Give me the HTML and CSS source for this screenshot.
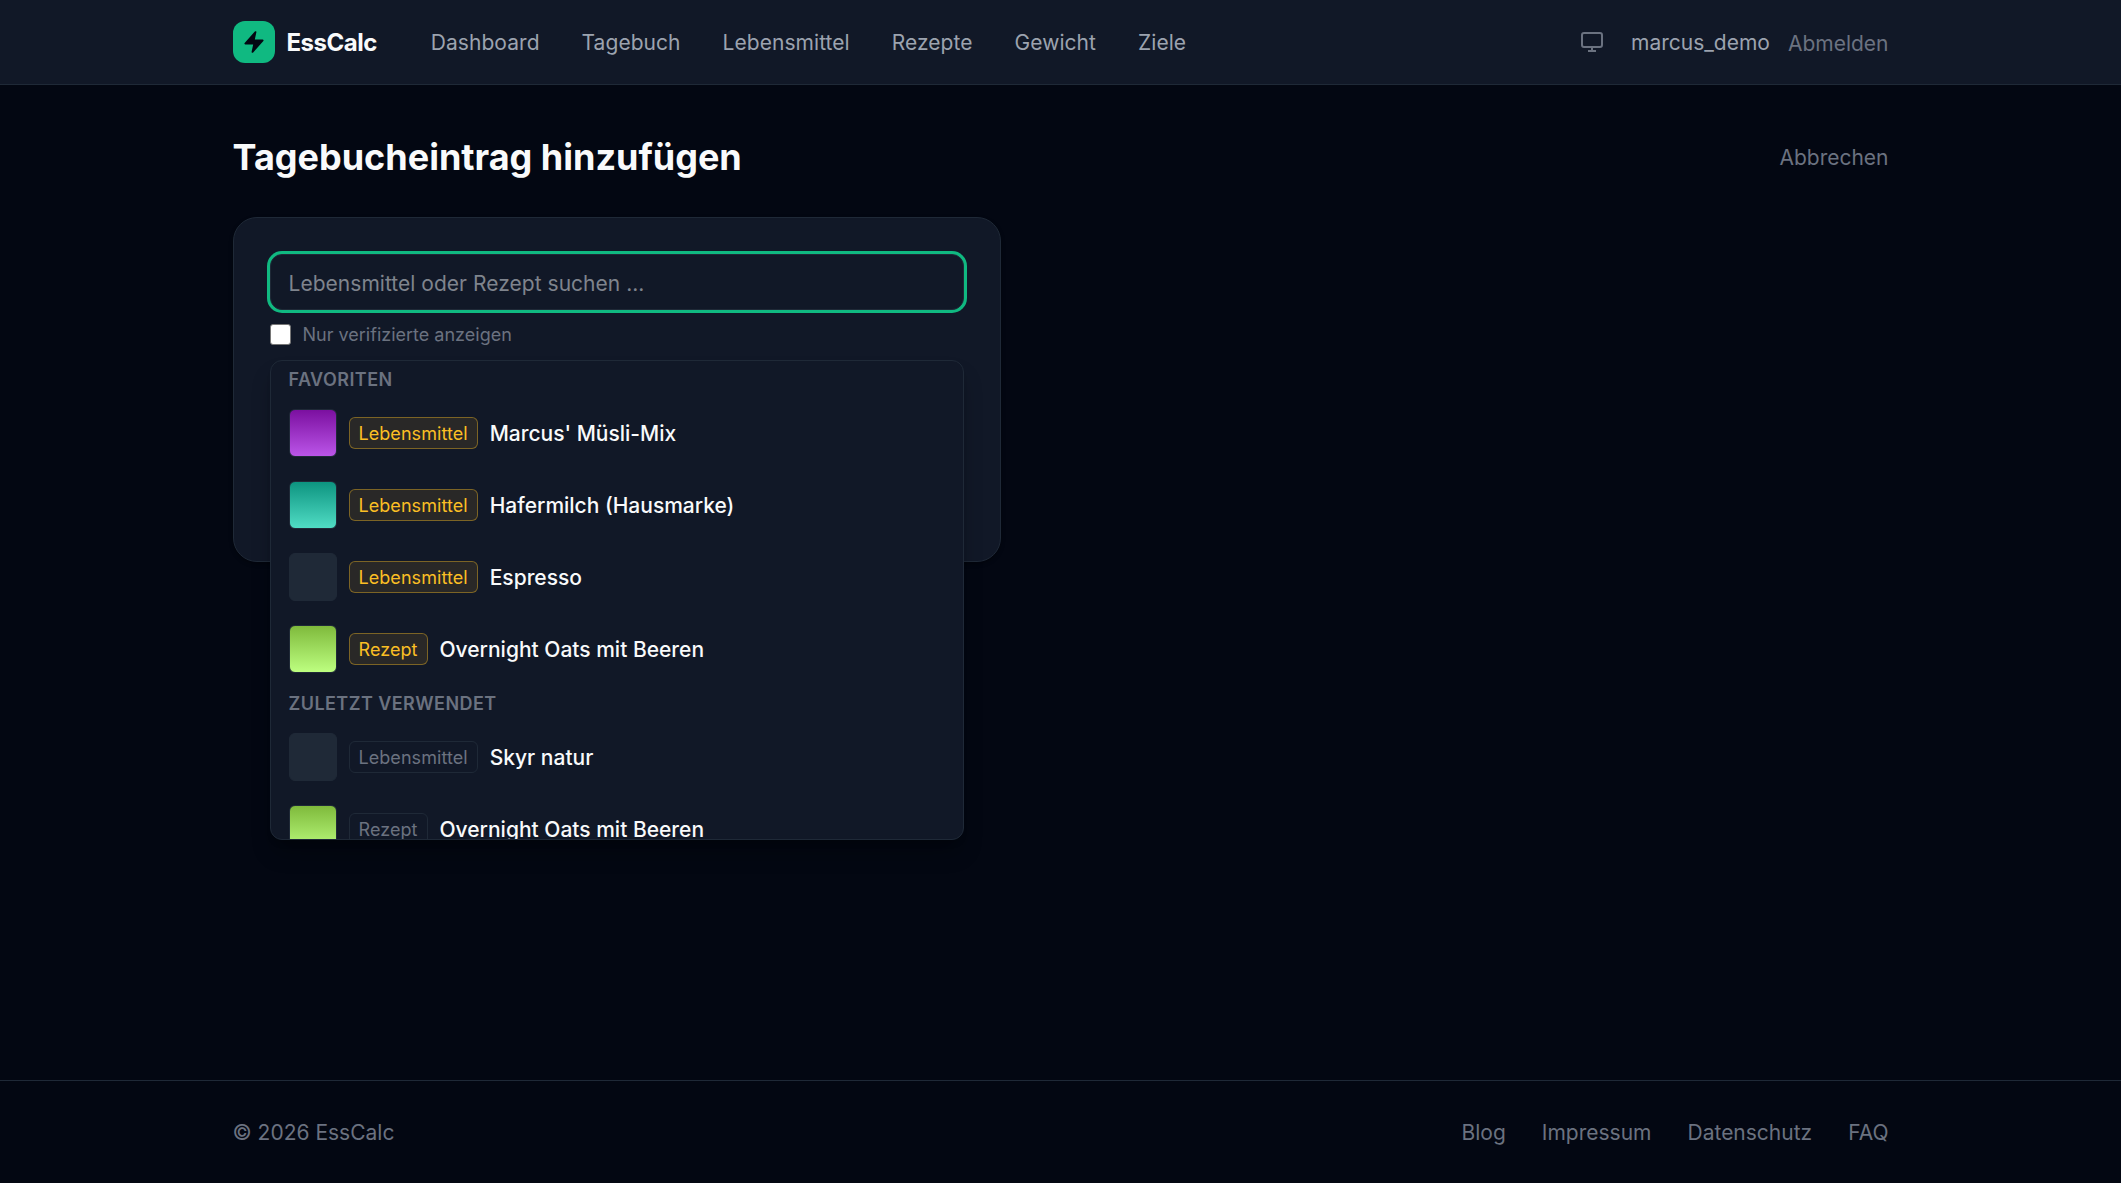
FILE: index.html
```html
<!DOCTYPE html>
<html lang="de">
<head>
    <meta charset="UTF-8">
    <meta name="viewport" content="width=device-width, initial-scale=1.0">
    <title>Tagebucheintrag hinzufügen - EssCalc</title>
    <link rel="stylesheet" href="styles.css">
</head>
<body>
    <header class="site-header">
        <div class="container header-inner">
            <a href="#" class="brand">
                <span class="brand-icon">
                    <svg viewBox="0 0 20 20" width="24" height="24" fill="currentColor"><path d="M11.983 1.907a.75.75 0 0 0-1.292-.657l-8.5 9.5A.75.75 0 0 0 2.75 12h6.572l-1.305 6.093a.75.75 0 0 0 1.292.657l8.5-9.5A.75.75 0 0 0 17.25 8h-6.572l1.305-6.093Z"/></svg>
                </span>
                <span class="brand-name">EssCalc</span>
            </a>
            <nav class="main-nav">
                <a href="#">Dashboard</a>
                <a href="#">Tagebuch</a>
                <a href="#">Lebensmittel</a>
                <a href="#">Rezepte</a>
                <a href="#">Gewicht</a>
                <a href="#">Ziele</a>
            </nav>
            <div class="user-menu">
                <button class="theme-button" type="button" aria-label="Design">
                    <svg viewBox="0 0 24 24" width="24" height="24" fill="none" stroke="currentColor" stroke-width="2"><rect x="2" y="3" width="20" height="14" rx="2"/><path d="M8 21h8M12 17v4"/></svg>
                </button>
                <a href="#" class="user-name">marcus_demo</a>
                <button class="logout" type="button">Abmelden</button>
            </div>
        </div>
    </header>

    <main class="container content">
        <div class="page-head">
            <h1>Tagebucheintrag hinzufügen</h1>
            <a href="#" class="cancel">Abbrechen</a>
        </div>

        <section class="card">
            <input class="search" type="text" placeholder="Lebensmittel oder Rezept suchen ..." autocomplete="off">
            <label class="verified">
                <input type="checkbox">
                <span>Nur verifizierte anzeigen</span>
            </label>

            <!-- Vorschläge liegen über der Karte -->
            <div class="dropdown">
                <h2 class="group-title">Favoriten</h2>
                <ul class="results">
                    <li class="result">
                        <span class="thumb thumb-purple"></span>
                        <span class="tag tag-favorite">Lebensmittel</span>
                        <span class="name">Marcus' Müsli-Mix</span>
                    </li>
                    <li class="result">
                        <span class="thumb thumb-teal"></span>
                        <span class="tag tag-favorite">Lebensmittel</span>
                        <span class="name">Hafermilch (Hausmarke)</span>
                    </li>
                    <li class="result">
                        <span class="thumb"></span>
                        <span class="tag tag-favorite">Lebensmittel</span>
                        <span class="name">Espresso</span>
                    </li>
                    <li class="result">
                        <span class="thumb thumb-green"></span>
                        <span class="tag tag-favorite">Rezept</span>
                        <span class="name">Overnight Oats mit Beeren</span>
                    </li>
                </ul>
                <h2 class="group-title">Zuletzt verwendet</h2>
                <ul class="results">
                    <li class="result">
                        <span class="thumb"></span>
                        <span class="tag">Lebensmittel</span>
                        <span class="name">Skyr natur</span>
                    </li>
                    <li class="result">
                        <span class="thumb thumb-green"></span>
                        <span class="tag">Rezept</span>
                        <span class="name">Overnight Oats mit Beeren</span>
                    </li>
                </ul>
            </div>
        </section>
    </main>

    <footer class="site-footer">
        <div class="container footer-inner">
            <span class="copyright">© 2026 EssCalc</span>
            <nav class="footer-nav">
                <a href="#">Blog</a>
                <a href="#">Impressum</a>
                <a href="#">Datenschutz</a>
                <a href="#">FAQ</a>
            </nav>
        </div>
    </footer>
</body>
</html>
```
FILE: styles.css
```css
* {
    box-sizing: border-box;
}

body {
    margin: 0;
    min-height: 100vh;
    display: flex;
    flex-direction: column;
    background-color: #030712;
    color: #f9fafb;
    font-family: Inter, "Liberation Sans", sans-serif;
    font-size: 21px;
    line-height: 31px;
}

a {
    color: inherit;
    text-decoration: none;
}

button {
    padding: 0;
    border: none;
    background: none;
    font: inherit;
    cursor: pointer;
}

.container {
    width: 100%;
    max-width: 1728px;
    margin: 0 auto;
    padding: 0 36px;
}

/* Kopfzeile */
.site-header {
    background-color: #111827;
    border-bottom: 1px solid #1f2937;
}

.header-inner {
    display: flex;
    align-items: center;
    height: 84px;
}

.brand {
    display: flex;
    align-items: center;
    gap: 12px;
}

.brand-icon {
    display: flex;
    align-items: center;
    justify-content: center;
    width: 42px;
    height: 42px;
    border-radius: 12px;
    background-color: #10b981;
    color: #030712;
}

.brand-name {
    padding-top: 1px;
    font-size: 24px;
    font-weight: 700;
    letter-spacing: -0.5px;
}

.main-nav {
    display: flex;
    gap: 42px;
    margin-left: 54px;
    padding-top: 1px;
    color: #9ca3af;
    letter-spacing: 0.05px;
}

.user-menu {
    display: flex;
    align-items: center;
    margin-left: auto;
}

.theme-button {
    display: flex;
    margin-right: 27px;
    color: #6b7280;
}

.user-name {
    margin-right: 18px;
    padding-top: 1px;
    color: #9ca3af;
}

.logout {
    padding-top: 3px;
    color: #6b7280;
}

/* Inhalt */
.content {
    flex: 1;
    padding-top: 48px;
}

.page-head {
    display: flex;
    align-items: center;
    justify-content: space-between;
    margin-bottom: 36px;
}

h1 {
    margin: 0;
    font-size: 36px;
    font-weight: 700;
    line-height: 48px;
}

.cancel {
    padding-top: 1px;
    color: #6b7280;
}

.card {
    position: relative;
    width: 768px;
    height: 345px;
    padding: 36px;
    background-color: #111827;
    border: 1px solid #1f2937;
    border-radius: 24px;
    box-shadow: 0 2px 4px rgba(0, 0, 0, 0.3);
}

.search {
    display: block;
    width: 100%;
    height: 56px;
    padding: 2px 18px 0;
    border: 1px solid #1f2937;
    border-radius: 12px;
    outline: none;
    background-color: #111827;
    color: #f9fafb;
    font: inherit;
    line-height: 30px;
    letter-spacing: 0.03px;
    box-shadow: 0 0 0 3px #10b981;
}

.search::placeholder {
    color: #7f848d;
}

.verified {
    display: flex;
    align-items: center;
    gap: 12px;
    margin-top: 12px;
    color: #6b7280;
    font-size: 18px;
    line-height: 25px;
}

.verified input {
    appearance: none;
    width: 21px;
    height: 21px;
    margin: 0;
    border: 1px solid #767676;
    border-radius: 3px;
    background-color: #fff;
}

/* Vorschlagsliste */
.dropdown {
    position: absolute;
    top: 142px;
    left: 36px;
    right: 36px;
    height: 480px;
    overflow: hidden;
    background-color: #111827;
    border: 1px solid #1f2937;
    border-radius: 12px;
    box-shadow: 0 15px 22px -4px rgba(0, 0, 0, 0.3), 0 6px 9px -6px rgba(0, 0, 0, 0.3);
}

.group-title {
    margin: 0;
    padding: 6px 18px 5px;
    color: #6b7280;
    font-size: 18px;
    font-weight: 600;
    line-height: 25px;
    letter-spacing: 0.45px;
    text-transform: uppercase;
}

.results {
    margin: 0;
    padding: 0;
    list-style: none;
}

.result {
    display: flex;
    align-items: center;
    gap: 12px;
    padding: 12px 18px;
}

.thumb {
    width: 48px;
    height: 48px;
    border: 1px solid #1f2937;
    border-radius: 6px;
    background-color: #1f2937;
}

.thumb-purple {
    background-image: linear-gradient(#7b10a0, #bb55e8);
}

.thumb-teal {
    background-image: linear-gradient(#0d9480, #50dcc4);
}

.thumb-green {
    background-image: linear-gradient(#7fba3c, #bdff80);
}

.tag {
    padding: 3px 9px 2px;
    border: 1px solid #1f2937;
    border-radius: 6px;
    color: #6b7280;
    font-size: 18px;
    line-height: 25px;
    letter-spacing: 0.06px;
}

.tag-favorite {
    background-color: rgba(251, 191, 36, 0.1);
    border-color: rgba(251, 191, 36, 0.4);
    color: #fbbf24;
}

.name {
    padding-top: 1px;
    font-weight: 500;
}

/* Fußzeile */
.site-footer {
    border-top: 1px solid #1f2937;
    color: #6b7280;
}

.footer-inner {
    display: flex;
    align-items: center;
    justify-content: space-between;
    height: 102px;
}

.copyright {
    padding-top: 1px;
}

.footer-nav {
    display: flex;
    gap: 36px;
    padding-top: 1px;
}
```
